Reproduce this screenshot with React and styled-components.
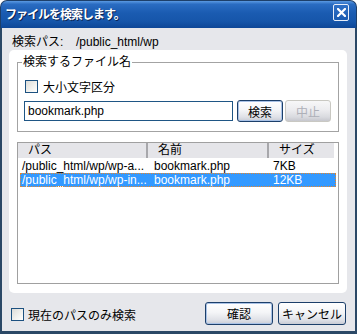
import React from 'react'
import styled, { createGlobalStyle } from 'styled-components'

const GlobalStyle = createGlobalStyle`
  html, body {
    margin: 0;
    background: #ffffff;
  }
  * {
    box-sizing: border-box;
  }
`

const FONT = `"Liberation Sans", "Noto Sans CJK JP", sans-serif`

const rows = [
  { path: '/public_html/wp/wp-a...', name: 'bookmark.php', size: '7KB', selected: false },
  { path: '/public_html/wp/wp-in...', name: 'bookmark.php', size: '12KB', selected: true },
]

const App = () => {
  return (
    <>
      <GlobalStyle />
      <Window>
        <TitleBar>
          <TitleText>ファイルを検索します。</TitleText>
          <CloseButton>
            <svg width="9" height="9" viewBox="0 0 9 9">
              <path d="M1 1 L8 8 M8 1 L1 8" stroke="#fff" strokeWidth="2.2" strokeLinecap="square" />
            </svg>
          </CloseButton>
        </TitleBar>

        <Body>
          <PathRow>
            <PathLabel>検索パス:</PathLabel>
            <span>/public_html/wp</span>
          </PathRow>

          <Panel>
            <Group>
              <Legend>検索するファイル名</Legend>
              <CheckRow>
                <CheckBox />
                <span>大小文字区分</span>
              </CheckRow>
              <InputRow>
                <TextField defaultValue="bookmark.php" />
                <Button $primary>検索</Button>
                <Button disabled>中止</Button>
              </InputRow>
            </Group>

            <List>
              <HeaderRow>
                <HeaderCell>パス</HeaderCell>
                <HeaderCell>名前</HeaderCell>
                <HeaderCell $last>サイズ</HeaderCell>
              </HeaderRow>
              {rows.map((r, i) => (
                <Row key={i} $selected={r.selected}>
                  <Cell $pad={2}>{r.path}</Cell>
                  <Cell $pad={6}>{r.name}</Cell>
                  <Cell $pad={4}>{r.size}</Cell>
                </Row>
              ))}
            </List>
          </Panel>

          <Footer>
            <FooterCheck>
              <CheckBox />
              <span>現在のパスのみ検索</span>
            </FooterCheck>
            <FooterButtons>
              <Button $wide $primary>確認</Button>
              <Button $wide>キャンセル</Button>
            </FooterButtons>
          </Footer>
        </Body>
      </Window>
    </>
  )
}

export default App

const Window = styled.div`
  width: 357px;
  height: 334px;
  display: flex;
  flex-direction: column;
  font-family: ${FONT};
  font-size: 12px;
  color: #000;
`

const TitleBar = styled.div`
  height: 28px;
  flex: none;
  display: flex;
  align-items: flex-start;
  justify-content: space-between;
  padding: 0 7px 0 4px;
  border-radius: 7px 7px 0 0;
  border: 1px solid #1d3f6a;
  border-bottom: none;
  background: linear-gradient(180deg, #5b9ae3 0%, #2a6cc2 12%, #1a5bb1 45%, #1656aa 75%, #0e4797 100%);
`

const TitleText = styled.div`
  padding-top: 7px;
  line-height: 14px;
  font-weight: bold;
  letter-spacing: -1px;
  color: #ffffff;
  text-shadow: 1px 1px 0 #0b2350;
`

const CloseButton = styled.div`
  margin-top: 3px;
  width: 16px;
  height: 17px;
  border: 1px solid #e8eef8;
  border-radius: 2px;
  display: flex;
  align-items: center;
  justify-content: center;
  background: linear-gradient(180deg, #2f70c6 0%, #1a5bb1 100%);
`

const Body = styled.div`
  flex: 1;
  display: flex;
  flex-direction: column;
  background: #e6e7eb;
  border: 2px solid #2b4866;
  border-top: none;
  border-bottom-width: 3px;
  padding: 0 8px 0 7px;
`

const PathRow = styled.div`
  height: 22px;
  flex: none;
  padding: 7px 0 0 3px;
  line-height: 15px;
  display: flex;
`

const PathLabel = styled.span`
  width: 64px;
`

const Panel = styled.div`
  height: 243px;
  flex: none;
  background: #ffffff;
  border-radius: 5px;
  padding: 5px 8px 9px 8px;
  display: flex;
  flex-direction: column;
`

const Group = styled.fieldset`
  margin: 0;
  padding: 9px 7px 9px 6px;
  border: 1px solid #a3a3a3;
`

const Legend = styled.legend`
  margin-left: -2px;
  padding: 0 1px;
  line-height: 14px;
`

const CheckRow = styled.div`
  height: 16px;
  display: flex;
  align-items: center;
  gap: 5px;
  padding-left: 1px;
`

const CheckBox = styled.span`
  width: 13px;
  height: 13px;
  flex: none;
  border: 1px solid #1c5180;
  background: linear-gradient(135deg, #dcdcd8 0%, #f2f2ef 60%, #ffffff 100%);
`

const InputRow = styled.div`
  margin-top: 6px;
  height: 22px;
  display: flex;
  align-items: center;
  gap: 4px;
`

const TextField = styled.input`
  width: 209px;
  height: 20px;
  margin: 0;
  padding: 0 3px;
  border: 1px solid #1f5685;
  font-family: ${FONT};
  font-size: 12px;
  color: #000;
  outline: none;
`

const Button = styled.button`
  width: ${p => (p.$wide ? '68px' : '46px')};
  height: ${p => (p.$wide ? '23px' : '22px')};
  margin: 0;
  padding: 0;
  font-family: ${FONT};
  font-size: 12px;
  color: #000;
  border: 1px solid #1c3f6a;
  border-radius: 3px;
  background: linear-gradient(180deg, #ffffff 0%, #f4f5f7 45%, #dfe1e7 80%, #c9ccd5 100%);
  box-shadow: ${p => (p.$primary ? 'inset 0 0 0 1px #a9c2e6' : 'none')};

  & + & {
    margin-left: -2px;
  }

  &:disabled {
    color: #aeb0b8;
    border-color: #c9c8c2;
    box-shadow: none;
    background: linear-gradient(180deg, #f7f7f8 0%, #ececef 45%, #d9dadf 80%, #c6c7cd 100%);
  }
`

const List = styled.div`
  flex: 1;
  margin-top: 10px;
  border: 1px solid #a0a0a0;
  background: #ffffff;
`

const HeaderRow = styled.div`
  width: 316px;
  height: 16px;
  display: grid;
  grid-template-columns: 130px 121px 65px;
  background: #e5e5e9;
  border-bottom: 1px solid #ffffff;
`

const HeaderCell = styled.div`
  padding-left: 10px;
  line-height: 15px;
  border-right: ${p => (p.$last ? 'none' : '2px solid #a7a7ab')};
`

const Row = styled.div`
  margin: 0 2px;
  height: 14px;
  display: grid;
  grid-template-columns: 128px 121px 67px;
  line-height: 14px;
  white-space: nowrap;
  color: ${p => (p.$selected ? '#ffffff' : '#000000')};
  background: ${p => (p.$selected ? '#3399ff' : 'transparent')};
  outline: ${p => (p.$selected ? '1px dotted #e8862a' : 'none')};
  outline-offset: -1px;
`

const Cell = styled.div`
  padding-left: ${p => p.$pad}px;
  overflow: hidden;
`

const Footer = styled.div`
  flex: 1;
  display: flex;
  align-items: flex-start;
  padding: 9px 1px 0 2px;
`

const FooterCheck = styled.div`
  margin-top: 6px;
  height: 13px;
  display: flex;
  align-items: center;
  gap: 4px;
`

const FooterButtons = styled.div`
  margin-left: auto;
  display: flex;
  gap: 7px;
`
